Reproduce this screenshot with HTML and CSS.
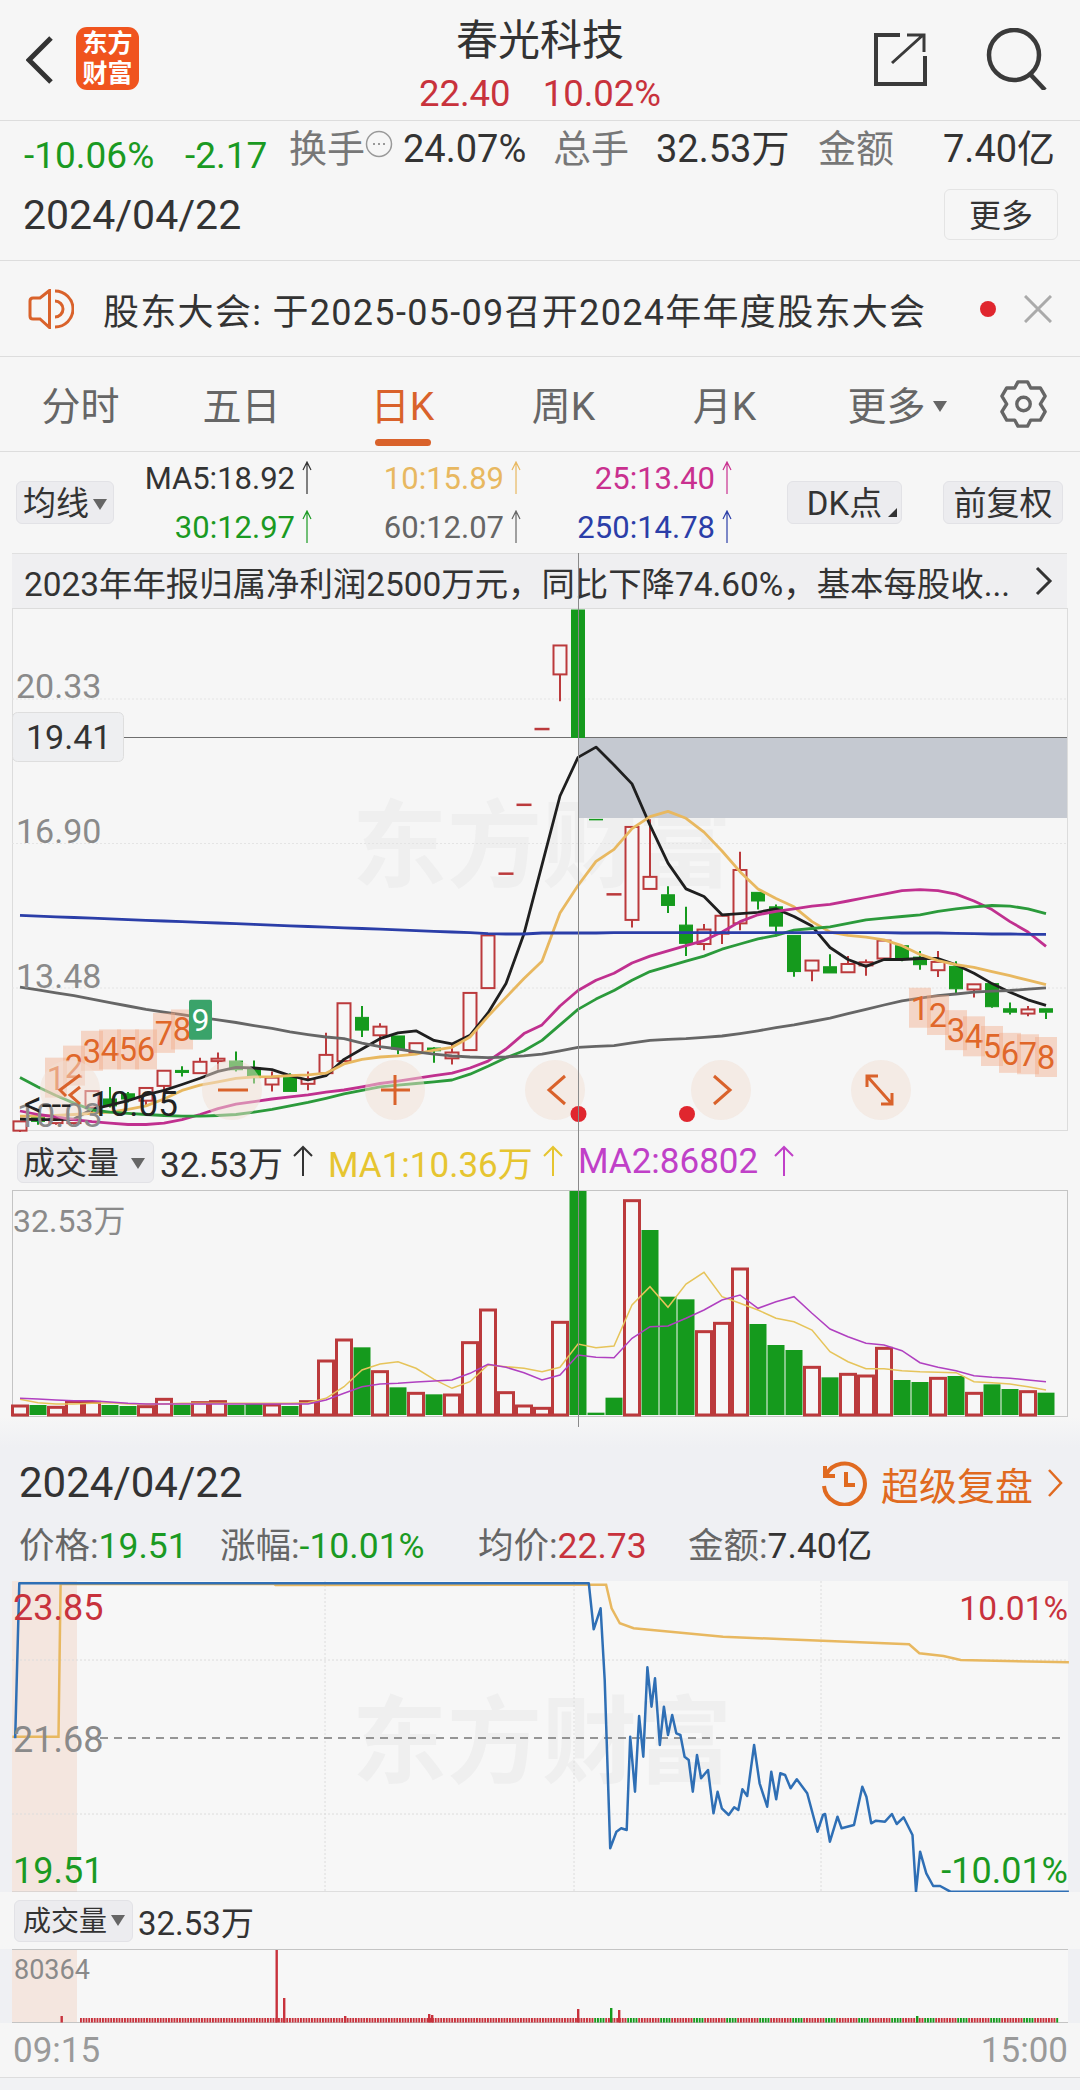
FILE: index.html
```html
<!DOCTYPE html>
<html lang="zh-CN">
<head>
  <meta charset="UTF-8">
  <meta name="viewport" content="width=device-width, initial-scale=1.0">
  <title>春光科技</title>
  <link rel="stylesheet" href="styles.css">
</head>
<body>
  <svg class="defs" width="0" height="0">
    <symbol id="up" viewBox="0 0 12 34">
      <path d="M6 33V1M2 9L6 1l4 8" fill="none" stroke="currentColor" stroke-width="1.200"/>
    </symbol>
    <symbol id="up-wide" viewBox="0 0 22 32">
      <path d="M11 31V2M2 11l9-9 9 9" fill="none" stroke="currentColor" stroke-width="2"/>
    </symbol>
  </svg>

  <!-- Top bar -->
  <header class="top-bar">
    <div class="top-left">
      <svg class="back" width="28" height="48" viewBox="0 0 28 48"><path d="M25 2L3 24l22 22" fill="none" stroke="#333" stroke-width="5"/></svg>
      <div class="logo">东方<br>财富</div>
    </div>
    <div class="title">
      <div class="name">春光科技</div>
      <div class="price"><span>22.40</span><span>10.02%</span></div>
    </div>
    <div class="top-right">
      <svg class="share" width="54" height="54" viewBox="0 0 54 54" fill="none" stroke="#3a3a3a" stroke-width="4">
        <path d="M27 3H3v49h49V24"/>
        <path d="M19 31L50 3M34 3h17v17" stroke-width="3"/>
      </svg>
      <svg width="62" height="62" viewBox="0 0 62 62" fill="none" stroke="#3a3a3a" stroke-width="4.500">
        <circle cx="28" cy="27" r="25"/>
        <path d="M44 46l15 16"/>
      </svg>
    </div>
  </header>

  <!-- Quote summary -->
  <section class="quote">
    <div class="quote-row">
      <span class="green low">-10.06%</span>
      <span class="green low">-2.17</span>
      <span class="gray">换手</span>
      <svg class="tip" width="28" height="28" viewBox="0 0 28 28"><circle cx="14" cy="14" r="12.500" fill="none" stroke="#999" stroke-width="1.500"/><path d="M8 14h2M13 14h2M18 14h2" stroke="#999" stroke-width="2"/></svg>
      <span>24.07%</span>
      <span class="gray">总手</span>
      <span>32.53万</span>
      <span class="gray">金额</span>
      <span>7.40亿</span>
    </div>
    <div class="date-row">
      <span class="date">2024/04/22</span>
      <span class="more-btn">更多</span>
    </div>
  </section>

  <!-- Notice -->
  <section class="notice">
    <svg class="speaker" width="46" height="40" viewBox="0 0 46 40" fill="none" stroke="#d9622b" stroke-width="3">
      <path d="M21.500 1.500L12 9H5Q2 9 2 12V27Q2 30 5 30H12L21.500 38.500Z"/>
      <path d="M27 12A8 8 0 0 1 27 28"/>
      <path d="M27 2A18 18 0 0 1 27 38"/>
    </svg>
    <span class="notice-text">股东大会: 于2025-05-09召开2024年年度股东大会</span>
    <i class="dot"></i>
    <svg class="close" width="28" height="28" viewBox="0 0 28 28"><path d="M1 1l26 26M27 1L1 27" stroke="#aaa" stroke-width="3"/></svg>
  </section>

  <!-- Period tabs -->
  <nav class="tabs">
    <span class="tab">分时</span>
    <span class="tab">五日</span>
    <span class="tab active">日K</span>
    <span class="tab">周K</span>
    <span class="tab">月K</span>
    <span class="tab more">更多<i class="caret"></i></span>
    <svg class="gear" width="48" height="50" viewBox="-1 -1 48 52" fill="none" stroke="#666" stroke-width="3.500">
      <path d="M16.700 2H26.700L30 8.300H40L45 16.700L40 25L45 33L40 41.700H30L26.700 48H16.700L13.300 41.700H5L0 33L5 25L0 16.700L5 8.300H13.300Z" stroke-linejoin="round"/>
      <circle cx="22.500" cy="25" r="7"/>
    </svg>
  </nav>

  <div class="chart-stack">
    <div class="crosshair"></div>

    <!-- Moving averages -->
    <div class="ma-row">
      <span class="chip ma-chip">均线<i class="caret small"></i></span>
      <div class="ma-grid">
        <span class="ma c-black">MA5:18.92<svg class="up"><use href="#up"/></svg></span>
        <span class="ma c-orange">10:15.89<svg class="up"><use href="#up"/></svg></span>
        <span class="ma c-pink">25:13.40<svg class="up"><use href="#up"/></svg></span>
        <span class="ma c-green">30:12.97<svg class="up"><use href="#up"/></svg></span>
        <span class="ma c-gray">60:12.07<svg class="up"><use href="#up"/></svg></span>
        <span class="ma c-blue">250:14.78<svg class="up"><use href="#up"/></svg></span>
      </div>
      <span class="chip dk-chip">DK点<i class="corner"></i></span>
      <span class="chip adj-chip">前复权</span>
    </div>

    <div class="news">
      <span>2023年年报归属净利润2500万元，同比下降74.60%，基本每股收...</span>
      <svg width="18" height="30" viewBox="0 0 18 30"><path d="M2 2l13 13L2 28" fill="none" stroke="#333" stroke-width="3"/></svg>
    </div>

    <!-- Candlestick chart -->
    <svg class="chart kline" width="1080" height="524" viewBox="0 608 1080 524">
      <rect class="box" x="12.500" y="608.500" width="1055" height="522"/>
      <text class="watermark" x="352" y="880">东方财富</text>
      <path class="grid" d="M12 699H1067M12 843.500H1067M12 988H1067"/>
      <rect class="zone" x="578" y="738" width="489" height="80"/>
      <path class="level" d="M124 737.500H1067"/>
      <g id="candles"></g>
      <g id="ma-lines"></g>
      <g id="badges"></g>
      <g class="pads">
        <circle cx="70" cy="1090" r="30"/>
        <circle cx="232" cy="1090" r="30"/>
        <circle cx="395" cy="1090" r="30"/>
        <circle cx="555" cy="1090" r="30"/>
        <circle cx="721" cy="1090" r="30"/>
        <circle cx="881" cy="1090" r="30"/>
      </g>
      <g class="pad-icons">
        <path d="M80 1075L60 1090L66 1096M80 1087L70 1095L80 1104"/>
        <path d="M218 1090H248"/>
        <path d="M381 1090H410M395 1075V1105"/>
        <path d="M565 1076L549 1090L565 1104"/>
        <path d="M714 1076L730 1090L714 1104"/>
        <path d="M867 1076L892 1104M867 1087V1076H878M892 1093V1104H881"/>
      </g>
      <circle class="mark" cx="578.500" cy="1114" r="8"/>
      <circle class="mark" cx="687" cy="1114" r="8"/>
      <text class="axis" x="16" y="698">20.33</text>
      <text class="axis" x="16" y="843">16.90</text>
      <text class="axis" x="16" y="988">13.48</text>
      <text class="axis" x="17" y="1127">10.03</text>
      <text class="low-mark" x="24" y="1116">&lt;---</text>
      <text class="low-mark" x="90" y="1116">10.05</text>
      <rect class="level-tag" x="12.500" y="712.500" width="111" height="49" rx="5"/>
      <text class="level-text" x="26" y="749">19.41</text>
    </svg>

    <!-- Volume -->
    <div class="indicator-row">
      <span class="chip vol-chip">成交量<i class="caret small"></i></span>
      <span class="vol-val">32.53万<svg class="up-wide"><use href="#up-wide"/></svg></span>
      <span class="vol-val c-yellow">MA1:10.36万<svg class="up-wide"><use href="#up-wide"/></svg></span>
      <span class="vol-val c-purple">MA2:86802<svg class="up-wide"><use href="#up-wide"/></svg></span>
    </div>
    <svg class="chart volume" width="1080" height="227" viewBox="0 1190 1080 227">
      <rect class="vbox" x="12.500" y="1190.500" width="1055" height="226"/>
      <g id="vol-bars"></g>
      <g id="vol-lines"></g>
      <text class="axis small" x="13" y="1232">32.53万</text>
    </svg>
  </div>

  <!-- Super review -->
  <section class="review">
    <div class="review-head">
      <span class="date big">2024/04/22</span>
      <span class="review-link">
        <svg width="46" height="46" viewBox="0 0 46 46" fill="none" stroke="#e06a20" stroke-width="4">
          <path d="M5 15A20.500 20.500 0 1 1 3 26"/>
          <path d="M4 6V16H14"/>
          <path d="M25 12V25H34"/>
        </svg>
        <span>超级复盘</span>
        <svg width="16" height="30" viewBox="0 0 16 30"><path d="M2 2l12 13L2 28" fill="none" stroke="#e06a20" stroke-width="2.500"/></svg>
      </span>
    </div>
    <div class="stat-row">
      <span class="stat"><b>价格:</b><em class="green">19.51</em></span>
      <span class="stat"><b>涨幅:</b><em class="green">-10.01%</em></span>
      <span class="stat"><b>均价:</b><em class="red">22.73</em></span>
      <span class="stat"><b>金额:</b><em>7.40亿</em></span>
    </div>

    <svg class="chart intraday" width="1080" height="311" viewBox="0 1581 1080 311">
      <rect class="plot" x="12" y="1581" width="1056" height="311"/>
      <rect class="auction" x="12" y="1581" width="65" height="311"/>
      <text class="watermark" x="352" y="1776">东方财富</text>
      <path class="dots" d="M12 1660H1068M12 1814H1068M325 1581V1892M574 1581V1892M821 1581V1892"/>
      <path class="mid" d="M100 1738H1066"/>
      <path class="base" d="M12 1892H1068"/>
      <polyline id="avg-line" class="avg"/>
      <polyline id="price-line" class="trend"/>
      <text class="tag c-red" x="13" y="1620">23.85</text>
      <text class="tag narrow c-red end" x="1068" y="1620">10.01%</text>
      <text class="tag c-axis" x="13" y="1752">21.68</text>
      <text class="tag c-lime" x="13" y="1883">19.51</text>
      <text class="tag c-lime end" x="1068" y="1883">-10.01%</text>
    </svg>

    <div class="indicator-row small-row">
      <span class="chip day-chip">成交量<i class="caret small"></i></span>
      <span class="day-val">32.53万</span>
    </div>

    <svg class="chart day-volume" width="1080" height="74" viewBox="0 1949 1080 74">
      <rect class="plot" x="12" y="1949" width="1056" height="74"/>
      <rect class="auction" x="12" y="1949" width="65" height="74"/>
      <path class="vbox-line" d="M12 1949.500H1068M12 2022.500H1068"/>
      <g id="tick-bars"></g>
      <text class="axis tiny" x="14" y="1979">80364</text>
    </svg>

    <div class="time-row"><span>09:15</span><span>15:00</span></div>
    <div class="foot"></div>
  </section>

  <script src="chart.js"></script>
</body>
</html>
```

FILE: styles.css
```css
/* General Styles */
* {
  box-sizing: border-box;
}
body {
  margin: 0;
  width: 1080px;
  height: 2090px;
  overflow: hidden;
  background-color: #f6f6f6;
  color: #333;
  font-family: Roboto, "Noto Sans CJK SC", sans-serif;
}
i, em, b {
  font-style: normal;
  font-weight: 400;
}
.defs {
  position: absolute;
}
.green { color: #1a9a22; }
.red { color: #c8323c; }
.gray { color: #777; }

/* Top bar */
.top-bar {
  height: 121px;
  border-bottom: 1px solid #ddd;
  display: grid;
  grid-template-columns: 1fr auto 1fr;
}
.top-left {
  display: flex;
  align-items: flex-start;
  padding: 27px 0 0 26px;
  gap: 22px;
}
.back {
  margin-top: 9px;
}
.logo {
  width: 63px;
  height: 63px;
  border-radius: 11px;
  background-color: #f0541e;
  color: #fff;
  font-size: 25px;
  font-weight: 700;
  line-height: 30px;
  text-align: center;
  padding-top: 2px;
}
.title {
  text-align: center;
  padding-top: 15px;
}
.name {
  font-size: 42px;
  line-height: 52px;
}
.price {
  display: flex;
  gap: 32px;
  justify-content: center;
  color: #c8323c;
  font-size: 36.5px;
  line-height: 40px;
  margin-top: 7px;
}
.top-right {
  display: flex;
  justify-content: flex-end;
  align-items: flex-start;
  gap: 59px;
  padding: 28px 32px 0 0;
}
.share {
  margin-top: 4px;
}

/* Quote summary */
.quote {
  height: 140px;
  border-bottom: 1px solid #ddd;
  padding-top: 6px;
}
.quote-row {
  display: grid;
  grid-template-columns: 161px 104px 76px 38px 150px 103px 162px 125px auto;
  padding-left: 24px;
  font-size: 38px;
  line-height: 44px;
  height: 52px;
  white-space: nowrap;
}
.quote-row .low {
  padding-top: 7px;
  font-size: 37px;
}
.tip {
  margin-top: 3px;
}
.date-row {
  display: flex;
  justify-content: space-between;
  align-items: center;
  padding: 10px 22px 0 23px;
}
.date {
  font-size: 41px;
  line-height: 50px;
}
.more-btn {
  width: 114px;
  height: 51px;
  border: 1px solid #e4e4e4;
  border-radius: 6px;
  font-size: 32px;
  line-height: 52px;
  text-align: center;
}

/* Notice */
.notice {
  height: 96px;
  border-bottom: 1px solid #ddd;
  display: flex;
  align-items: center;
  padding-left: 28px;
}
.notice-text {
  font-size: 36px;
  letter-spacing: 1.3px;
  margin-left: 29px;
  width: 877px;
  white-space: nowrap;
}
.dot {
  width: 16px;
  height: 16px;
  border-radius: 50%;
  background-color: #e0262e;
}
.close {
  margin-left: 28px;
}

/* Period tabs */
.tabs {
  height: 95px;
  border-bottom: 1px solid #ddd;
  display: flex;
  align-items: center;
  color: #666;
}
.tab {
  width: 161px;
  text-align: center;
  font-size: 39px;
  line-height: 50px;
  position: relative;
  padding-top: 5px;
}
.tab.more {
  width: 184px;
}
.tab.active {
  color: #d9622b;
}
.tab.active::after {
  content: "";
  position: absolute;
  left: 53px;
  top: 62px;
  width: 56px;
  height: 7px;
  border-radius: 4px;
  background-color: #d9622b;
}
.caret {
  display: inline-block;
  margin-left: 7px;
  vertical-align: 8px;
  border-left: 7px solid transparent;
  border-right: 7px solid transparent;
  border-top: 11px solid #666;
}
.caret.small {
  margin-left: 4px;
  vertical-align: 5px;
}
.gear {
  margin-left: 11px;
}

/* Charts area */
.chart-stack {
  position: relative;
}
.crosshair {
  position: absolute;
  left: 578px;
  top: 101px;
  width: 1px;
  height: 874px;
  background-color: #8a8a8a;
  z-index: 2;
}
.chart {
  display: block;
}
.ma-row {
  height: 101px;
  display: flex;
  align-items: center;
  padding-left: 16px;
}
.chip {
  background-color: #ececef;
  border: 1px solid #e2e2e6;
  border-radius: 6px;
  font-size: 33px;
  line-height: 43px;
  height: 43px;
  text-align: center;
  white-space: nowrap;
}
.ma-chip {
  width: 98px;
}
.dk-chip {
  width: 115px;
  margin-left: 54px;
  position: relative;
}
.corner {
  position: absolute;
  right: 4px;
  bottom: 6px;
  border-left: 9px solid transparent;
  border-bottom: 9px solid #333;
}
.adj-chip {
  width: 120px;
  margin-left: 41px;
}
.ma-grid {
  width: 619px;
  display: grid;
  grid-template-columns: 199px 209px 211px;
  grid-auto-rows: 49px;
}
.ma {
  display: flex;
  justify-content: flex-end;
  align-items: center;
  gap: 6px;
  font-size: 31px;
  white-space: nowrap;
}
.up {
  width: 12px;
  height: 34px;
}
.c-black { color: #333; }
.c-orange { color: #e8b860; }
.c-pink { color: #c9308f; }
.c-green { color: #1a9a22; }
.c-gray { color: #666; }
.c-blue { color: #2b3ea8; }
.c-yellow { color: #e6c530; }
.c-purple { color: #c040c8; }
.news {
  height: 55px;
  margin: 0 13px 0 12px;
  padding: 0 14px 0 12px;
  background-color: #efeff1;
  border-top: 1px solid #e0e0e0;
  display: flex;
  align-items: center;
  justify-content: space-between;
  font-size: 33.4px;
  white-space: nowrap;
}

/* Candlestick chart */
.box {
  fill: none;
  stroke: #dcdcdc;
}
.watermark {
  font-size: 95px;
  font-weight: 700;
  fill: #efefef;
}
.grid {
  stroke: #e4e4e4;
  stroke-width: 1;
  stroke-dasharray: 2 2;
}
.zone {
  fill: #c5c9d1;
}
.level {
  stroke: #6f6f6f;
  stroke-width: 1;
}
.pads circle {
  fill: #f2dfd4;
  fill-opacity: 0.5;
}
.pad-icons path {
  fill: none;
  stroke: #d9622b;
  stroke-width: 3;
}
.mark {
  fill: #e0262e;
}
.axis {
  font-size: 34px;
  fill: #8a8a8a;
}
.axis.small {
  font-size: 32px;
}
.axis.tiny {
  font-size: 27px;
}
.low-mark {
  font-size: 35px;
  fill: #222;
}
.level-tag {
  fill: #eeeff1;
  stroke: #dedede;
}
.level-text {
  font-size: 34px;
  fill: #333;
}
.badge-bg {
  fill: #f3a680;
  fill-opacity: 0.4;
}
.badge-num {
  font-size: 33px;
  fill: #e0672a;
  text-anchor: middle;
}
.badge-nine {
  fill: #3aa36a;
}
.badge-last {
  font-size: 32px;
  fill: #fff;
  text-anchor: middle;
}

/* Volume */
.indicator-row {
  height: 58px;
  display: flex;
  align-items: center;
  padding-left: 17px;
}
.vol-chip {
  width: 137px;
  text-align: left;
  padding-left: 5px;
  height: 42px;
  line-height: 42px;
  font-size: 32px;
  margin-top: 2px;
}
.vol-chip .caret {
  margin-left: 12px;
}
.vol-val {
  font-size: 35px;
  margin-left: 6px;
  width: 162px;
  display: inline-flex;
  align-items: center;
  gap: 9px;
  white-space: nowrap;
  color: #333;
}
.vol-val.c-yellow { color: #e6c530; width: 244px; }
.vol-val.c-purple { color: #c040c8; width: auto; gap: 15px; }
.up-wide {
  width: 22px;
  height: 32px;
  flex-shrink: 0;
}
.vbox {
  fill: none;
  stroke: #c4c4c4;
}

/* Super review */
.review {
  background: linear-gradient(#f6f6f6 0, #eff0f3 30px);
}
.review-head {
  height: 94px;
  padding: 38px 17px 0 19px;
  display: flex;
  align-items: center;
  justify-content: space-between;
}
.date.big {
  font-size: 42px;
}
.review-link {
  display: flex;
  align-items: center;
  gap: 14px;
  color: #e06a20;
  font-size: 38px;
}
.stat-row {
  height: 70px;
  padding: 0 0 8px 19px;
  display: grid;
  grid-template-columns: 201px 258px 210px auto;
  align-items: center;
  font-size: 35.5px;
}
.stat {
  white-space: nowrap;
}
.stat b {
  color: #666;
}
.plot {
  fill: #f7f7f7;
}
.auction {
  fill: #f4e6df;
}
.dots {
  stroke: #dcdcdc;
  stroke-dasharray: 2 2;
}
.mid {
  stroke: #777;
  stroke-dasharray: 8 6;
  stroke-width: 1.5;
}
.base {
  stroke: #c4c4c4;
}
.avg {
  fill: none;
  stroke: #e8b860;
  stroke-width: 2.5;
}
.trend {
  fill: none;
  stroke: #2f6fb5;
  stroke-width: 2.5;
  stroke-linejoin: round;
}
.tag {
  font-size: 36px;
}
.tag.narrow {
  font-size: 33.5px;
}
.tag.end {
  text-anchor: end;
}
.c-red { fill: #c8323c; }
.c-lime { fill: #1a9a22; }
.c-axis { fill: #8a8a8a; }
.small-row {
  height: 57px;
  padding-left: 14px;
  background-color: #f6f6f6;
}
.day-chip {
  width: 119px;
  height: 42px;
  line-height: 42px;
  font-size: 28px;
  text-align: left;
  padding-left: 8px;
}
.day-val {
  font-size: 33px;
  margin-left: 5px;
}
.vbox-line {
  stroke: #c4c4c4;
}
.time-row {
  height: 55px;
  padding: 6px 12px 0 13px;
  display: flex;
  justify-content: space-between;
  font-size: 35px;
  line-height: 44px;
  color: #9a9a9a;
  background-color: #f6f6f6;
  border-bottom: 1px solid #ddd;
}
.foot {
  height: 13px;
  background-color: #f1f2f4;
}
```

FILE: chart.js
```js
const SVG_NS = 'http://www.w3.org/2000/svg';
const RED = '#bb3a3c';
const GREEN = '#159a1d';
const BG = '#f7f7f7';

function add(parent, tag, attrs, text) {
  const node = document.createElementNS(SVG_NS, tag);
  for (const key in attrs) node.setAttribute(key, attrs[key]);
  if (text) node.textContent = text;
  parent.appendChild(node);
  return node;
}

// Candles sit 18px apart, starting at x=20
const candleX = k => 20 + 18 * k;
// Values below were read off the screenshot at ~2.9x
const priceY = v => 610 + v / 2.904;
// Volume values are read at 3x
const volY = v => 1130 + v / 3;

// [up?, body top, body bottom, wick top, wick bottom]
const candles = [
  [1, 1485, 1512, 1485, 1520], [0, 1470, 1485, 1465, 1495], [1, 1478, 1490, 1475, 1495],
  [1, 1480, 1490, 1478, 1495], [1, 1397, 1445, 1397, 1460], [0, 1420, 1440, 1385, 1445],
  [0, 1405, 1420, 1400, 1430], [1, 1388, 1425, 1385, 1440], [1, 1338, 1382, 1338, 1395],
  [0, 1337, 1343, 1325, 1355], [1, 1312, 1345, 1300, 1345], [1, 1303, 1310, 1285, 1335],
  [0, 1310, 1335, 1282, 1340], [0, 1330, 1358, 1308, 1375], [1, 1358, 1378, 1340, 1398],
  [0, 1358, 1398, 1345, 1398], [1, 1362, 1376, 1340, 1395], [1, 1292, 1345, 1228, 1345],
  [1, 1142, 1310, 1142, 1310], [0, 1183, 1220, 1150, 1240], [1, 1210, 1235, 1200, 1278],
  [0, 1237, 1275, 1237, 1290], [1, 1258, 1285, 1258, 1285], [0, 1272, 1280, 1270, 1315],
  [1, 1285, 1302, 1260, 1320], [1, 1112, 1278, 1112, 1278], [1, 945, 1098, 945, 1098],
  [1, 765, 765, 765, 765], [1, 565, 565, 565, 565], [1, 345, 345, 345, 345],
  [1, 103, 187, 103, 265], [0, 0, 370, 0, 370], [0, 608, 608, 608, 608],
  [1, 825, 825, 825, 825], [1, 630, 900, 630, 922], [1, 775, 810, 608, 810],
  [0, 827, 858, 802, 880], [0, 915, 968, 862, 1005], [1, 928, 970, 912, 988],
  [1, 888, 940, 888, 970], [1, 755, 910, 702, 930], [0, 820, 845, 820, 870],
  [0, 862, 918, 855, 948], [0, 945, 1050, 945, 1065], [1, 1018, 1047, 1018, 1078],
  [0, 1036, 1054, 1000, 1054], [1, 1028, 1052, 1005, 1052], [1, 1023, 1032, 1015, 1062],
  [1, 960, 1012, 960, 1012], [0, 975, 1015, 975, 1020], [0, 1008, 1030, 990, 1045],
  [1, 1022, 1046, 990, 1066], [0, 1035, 1100, 1020, 1112], [1, 1087, 1102, 1087, 1125],
  [0, 1085, 1152, 1085, 1155], [0, 1158, 1168, 1140, 1175], [1, 1160, 1172, 1150, 1180],
  [0, 1158, 1168, 1158, 1188]
];

const candleGroup = document.getElementById('candles');
candles.forEach((c, k) => {
  const x = candleX(k);
  const color = c[0] ? RED : GREEN;
  const top = priceY(c[1]);
  const bottom = priceY(c[2]);
  if (c[3] < c[1]) add(candleGroup, 'line', { x1: x, x2: x, y1: priceY(c[3]), y2: top, stroke: color, 'stroke-width': 2 });
  if (c[4] > c[2]) add(candleGroup, 'line', { x1: x, x2: x, y1: bottom, y2: priceY(c[4]), stroke: color, 'stroke-width': 2 });
  add(candleGroup, 'rect', {
    x: x - 6.5,
    y: top,
    width: 13,
    height: Math.max(bottom - top, 0.5),
    fill: c[0] ? BG : color,
    stroke: color,
    'stroke-width': c[0] ? 2 : 1
  });
});

// Moving averages, one y per candle
const maLines = [
  ['#1f1f1f', [1478, 1480, 1480, 1478, 1450, 1438, 1425, 1408, 1395, 1378, 1360, 1340, 1328, 1330, 1335, 1352, 1365, 1352, 1305, 1275, 1245, 1228, 1222, 1250, 1260, 1235, 1170, 1085, 940, 740, 540, 428, 398, 450, 505, 625, 735, 810, 832, 885, 882, 878, 868, 890, 918, 980, 1015, 1035, 1015, 1015, 1012, 1012, 1030, 1055, 1085, 1110, 1132, 1148]],
  ['#e8b860', [1470, 1470, 1468, 1465, 1462, 1458, 1450, 1440, 1420, 1395, 1380, 1370, 1360, 1356, 1355, 1352, 1350, 1345, 1318, 1305, 1298, 1295, 1290, 1278, 1270, 1240, 1180, 1125, 1070, 1020, 880, 800, 730, 695, 635, 600, 585, 605, 645, 700, 760, 810, 838, 862, 905, 935, 945, 950, 958, 975, 1000, 1018, 1030, 1038, 1050, 1062, 1075, 1088]],
  ['#c0308f', [1455, 1465, 1472, 1480, 1486, 1490, 1494, 1494, 1490, 1480, 1465, 1448, 1435, 1428, 1420, 1414, 1408, 1400, 1394, 1385, 1375, 1368, 1360, 1352, 1345, 1330, 1310, 1275, 1230, 1205, 1150, 1105, 1075, 1055, 1025, 1005, 990, 975, 960, 935, 905, 885, 875, 868, 860, 855, 845, 835, 825, 815, 812, 815, 825, 845, 870, 905, 935, 977]],
  ['#2b9a3b', [1358, 1385, 1410, 1432, 1452, 1458, 1462, 1465, 1468, 1470, 1470, 1468, 1465, 1458, 1450, 1440, 1430, 1418, 1405, 1395, 1385, 1380, 1375, 1370, 1365, 1348, 1325, 1300, 1280, 1250, 1205, 1160, 1130, 1105, 1075, 1050, 1035, 1020, 1005, 985, 970, 955, 945, 930, 925, 920, 910, 900, 895, 890, 885, 875, 868, 862, 858, 860, 868, 882]],
  ['#666666', [1095, 1103, 1112, 1120, 1130, 1140, 1150, 1160, 1168, 1175, 1183, 1190, 1198, 1207, 1215, 1225, 1233, 1240, 1245, 1258, 1268, 1275, 1283, 1290, 1295, 1298, 1300, 1298, 1295, 1290, 1280, 1270, 1267, 1265, 1257, 1250, 1247, 1245, 1241, 1237, 1230, 1222, 1213, 1205, 1195, 1185, 1172, 1160, 1147, 1135, 1127, 1120, 1115, 1110, 1107, 1105, 1101, 1097]],
  ['#2b3ea8', [887, 889, 891, 893, 895, 897, 899, 901, 903, 905, 907, 909, 911, 913, 915, 917, 919, 921, 923, 925, 927, 929, 931, 933, 935, 937, 940, 941, 941, 938, 938, 938, 938, 937, 937, 937, 937, 937, 937, 937, 937, 937, 937, 937, 937, 937, 937, 937, 937, 938, 938, 938, 939, 940, 941, 941, 942, 942]]
];

const maGroup = document.getElementById('ma-lines');
maLines.forEach(([color, ys]) => {
  const points = ys.map((v, k) => `${candleX(k)},${priceY(v).toFixed(1)}`).join(' ');
  add(maGroup, 'polyline', { points, fill: 'none', stroke: color, 'stroke-width': 2.8, 'stroke-linejoin': 'round' });
});

// TD sequence badges: [candle, top]
const badgeRuns = [
  [2, [1300, 1265, 1222, 1218, 1218, 1218, 1170, 1160]],
  [50, [1097, 1118, 1162, 1180, 1208, 1228, 1232, 1240]]
];

const badgeGroup = document.getElementById('badges');
badgeRuns.forEach(([start, tops]) => {
  tops.forEach((v, i) => {
    const x = candleX(start + i);
    const y = priceY(v);
    add(badgeGroup, 'rect', { class: 'badge-bg', x: x - 11, y, width: 22, height: 40 });
    add(badgeGroup, 'text', { class: 'badge-num', x, y: y + 32 }, String(i + 1));
  });
});
add(badgeGroup, 'rect', { class: 'badge-nine', x: 189, y: priceY(1132), width: 23, height: 40, rx: 2 });
add(badgeGroup, 'text', { class: 'badge-last', x: 200.5, y: priceY(1132) + 31 }, '9');

// Volume bars, top of each bar
const volumes = [828, 825, 832, 815, 817, 825, 828, 830, 808, 825, 818, 815, 825, 820, 825, 828, 815, 693, 630, 652, 725, 772, 790, 793, 795, 638, 540, 788, 828, 835, 577, 183, 848, 803, 212, 300, 500, 508, 605, 580, 417, 582, 645, 660, 712, 742, 733, 738, 655, 750, 756, 745, 738, 790, 763, 777, 785, 788];
// Green days in the volume pane don't always follow the candle
const volDown = [1, 5, 6, 9, 12, 13, 15, 19, 21, 23, 31, 32, 33, 35, 36, 37, 41, 42, 43, 45, 49, 50, 52, 54, 55, 57];

const barGroup = document.getElementById('vol-bars');
volumes.forEach((v, k) => {
  const down = volDown.includes(k);
  const top = volY(v);
  add(barGroup, 'rect', {
    x: candleX(k) - (down ? 8.5 : 7.5),
    y: top,
    width: down ? 17 : 15,
    height: 1415 - top,
    fill: down ? GREEN : BG,
    stroke: down ? 'none' : RED,
    'stroke-width': down ? 0 : 3
  });
});

const volLines = [
  ['#e6c45a', [808, 818, 822, 822, 820, 818, 822, 822, 822, 820, 820, 820, 820, 820, 820, 820, 818, 805, 770, 720, 702, 695, 715, 748, 775, 755, 705, 710, 715, 725, 712, 642, 653, 648, 525, 470, 532, 462, 427, 500, 520, 540, 565, 575, 600, 665, 695, 716, 716, 722, 725, 727, 728, 755, 758, 762, 770, 780]],
  ['#b040c0', [805, 807, 810, 812, 812, 816, 820, 822, 822, 822, 822, 822, 822, 822, 822, 822, 822, 810, 790, 770, 762, 760, 756, 753, 750, 730, 703, 712, 728, 750, 735, 675, 682, 683, 625, 590, 588, 565, 540, 510, 495, 535, 515, 500, 550, 597, 620, 640, 645, 662, 698, 712, 722, 737, 742, 745, 750, 755]]
];

const volLineGroup = document.getElementById('vol-lines');
volLines.forEach(([color, ys]) => {
  const points = ys.map((v, k) => `${candleX(k)},${volY(v).toFixed(1)}`).join(' ');
  add(volLineGroup, 'polyline', { points, fill: 'none', stroke: color, 'stroke-width': 1.5 });
});

// Intraday lines, read off a crop that was 1.452x wide and 3x high
const dayPoint = ([x, y]) => `${(x / 1.452).toFixed(1)},${(1580 + y / 3).toFixed(1)}`;

const pricePoints = [[22, 475], [28, 10], [855, 10], [862, 148], [872, 85], [878, 300], [886, 805], [895, 755], [902, 745], [910, 750], [915, 470], [922, 635], [928, 408], [934, 530], [940, 262], [946, 380], [951, 295], [958, 495], [964, 380], [970, 465], [976, 405], [982, 460], [988, 465], [994, 530], [1000, 540], [1006, 635], [1012, 525], [1018, 595], [1028, 570], [1036, 700], [1042, 635], [1048, 685], [1058, 705], [1066, 682], [1072, 690], [1078, 628], [1085, 648], [1095, 495], [1103, 610], [1114, 680], [1120, 575], [1127, 658], [1133, 580], [1140, 585], [1148, 625], [1157, 598], [1172, 640], [1187, 755], [1195, 705], [1198, 702], [1205, 785], [1216, 710], [1222, 745], [1240, 735], [1252, 620], [1258, 650], [1265, 730], [1272, 722], [1285, 725], [1295, 702], [1302, 732], [1312, 712], [1325, 765], [1330, 935], [1336, 815], [1345, 880], [1355, 918], [1365, 918], [1380, 935], [1552, 935]];
const avgPoints = [[18, 470], [85, 470], [88, 12], [398, 12], [400, 15], [855, 14], [880, 14], [888, 85], [900, 130], [920, 145], [1050, 170], [1140, 178], [1320, 193], [1335, 220], [1370, 228], [1395, 240], [1552, 247]];

document.getElementById('price-line').setAttribute('points', pricePoints.map(dayPoint).join(' '));
document.getElementById('avg-line').setAttribute('points', avgPoints.map(dayPoint).join(' '));

// Intraday volume ticks
const tickGroup = document.getElementById('tick-bars');
for (let x = 80; x < 1057; x += 2.75) {
  const color = x > 592 && Math.round(x) % 3 === 0 ? GREEN : '#c8323c';
  add(tickGroup, 'rect', { x, y: 2018, width: 1.9, height: 4.5, fill: color });
}
const spikes = [[60.5, 2016, '#c8323c'], [275.5, 1950, '#c8323c'], [283, 1998, '#c8323c'], [344, 2016, '#c8323c'], [428, 2014, '#c8323c'], [431, 2015, '#c8323c'], [577, 2009, '#c8323c'], [610, 2008, GREEN], [618, 2010, '#c8323c'], [916, 2016, GREEN]];
spikes.forEach(([x, y, fill]) => {
  add(tickGroup, 'rect', { x, y, width: 2.4, height: 2022.5 - y, fill });
});
```
